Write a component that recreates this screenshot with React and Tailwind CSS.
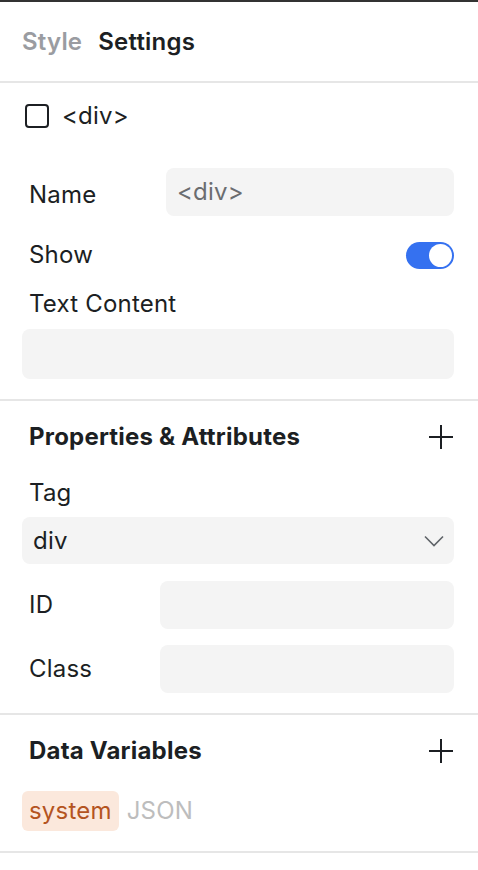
import React from 'react';

const Plus = () => (
  <svg width="26" height="26" viewBox="0 0 26 26" fill="none" stroke="#1c1f23" strokeWidth="2">
    <path d="M13 1v24M1 13h24" />
  </svg>
);

const Chevron = () => (
  <svg width="20" height="12" viewBox="0 0 20 12" fill="none" stroke="#5f6368" strokeWidth="1.6">
    <path d="M1 1.5l9 9 9-9" />
  </svg>
);

const Field = ({ className = '', children }) => (
  <div className={`flex items-center rounded-lg bg-[#f4f4f4] ${className}`}>{children}</div>
);

export default function App() {
  return (
    <div
      className="h-[870px] w-[478px] overflow-hidden border-t-2 border-[#333333] bg-white text-[24px] leading-[28px] tracking-[0.2px] text-[#1c1f23]"
      style={{ fontFamily: 'Inter, "Noto Sans", sans-serif' }}
    >
      <header className="flex h-[79px] items-center gap-[16px] px-[22px] font-semibold">
        <span className="text-[#9a9ca1]">Style</span>
        <span>Settings</span>
      </header>
      <div className="h-[2px] bg-[#e6e6e6]" />

      <section className="pb-[20px] pl-[22px] pr-[24px]">
        <div className="mt-[21px] flex h-[24px] items-center gap-[13px] pl-[3px]">
          <span className="h-[24px] w-[24px] rounded-[4px] border-2 border-[#1c1f23]" />
          <span>&lt;div&gt;</span>
        </div>
        <div className="mt-[40px] flex items-center">
          <span className="w-[144px] pl-[7px] pt-[6px]">Name</span>
          <Field className="h-[48px] flex-1 px-[11px] text-[#6b6d70]">&lt;div&gt;</Field>
        </div>
        <div className="mt-[25px] flex h-[28px] items-center justify-between">
          <span className="pl-[7px]">Show</span>
          <span className="flex h-[27px] w-[48px] items-center justify-end rounded-full bg-[#3571f0] pr-[2px]">
            <span className="h-[23px] w-[23px] rounded-full bg-white" />
          </span>
        </div>
        <div className="mt-[21px] h-[28px] pl-[7px]">Text Content</div>
        <Field className="mt-[11px] h-[50px]" />
      </section>
      <div className="h-[2px] bg-[#e6e6e6]" />

      <section className="pb-[20px] pl-[22px] pr-[24px]">
        <div className="mt-[22px] flex h-[28px] items-center justify-between">
          <span className="pl-[7px] font-bold">Properties &amp; Attributes</span>
          <Plus />
        </div>
        <div className="mt-[28px] h-[28px] pl-[7px]">Tag</div>
        <Field className="mt-[10px] h-[47px] justify-between pl-[11px] pr-[10px]">
          <span>div</span>
          <Chevron />
        </Field>
        <div className="mt-[17px] flex items-center">
          <span className="w-[138px] pl-[7px]">ID</span>
          <Field className="h-[48px] flex-1" />
        </div>
        <div className="mt-[16px] flex items-center">
          <span className="w-[138px] pl-[7px]">Class</span>
          <Field className="h-[48px] flex-1" />
        </div>
      </section>
      <div className="h-[2px] bg-[#e6e6e6]" />

      <section className="pb-[20px] pl-[22px] pr-[24px]">
        <div className="mt-[22px] flex h-[28px] items-center justify-between">
          <span className="pl-[7px] font-bold">Data Variables</span>
          <Plus />
        </div>
        <div className="mt-[26px] flex items-center gap-[8px]">
          <span className="flex h-[40px] items-center rounded-md bg-[#fbe8dc] px-[7px] text-[#b4541f]">
            system
          </span>
          <span className="text-[#bdbdbd]">JSON</span>
        </div>
      </section>
      <div className="h-[2px] bg-[#e6e6e6]" />
    </div>
  );
}
